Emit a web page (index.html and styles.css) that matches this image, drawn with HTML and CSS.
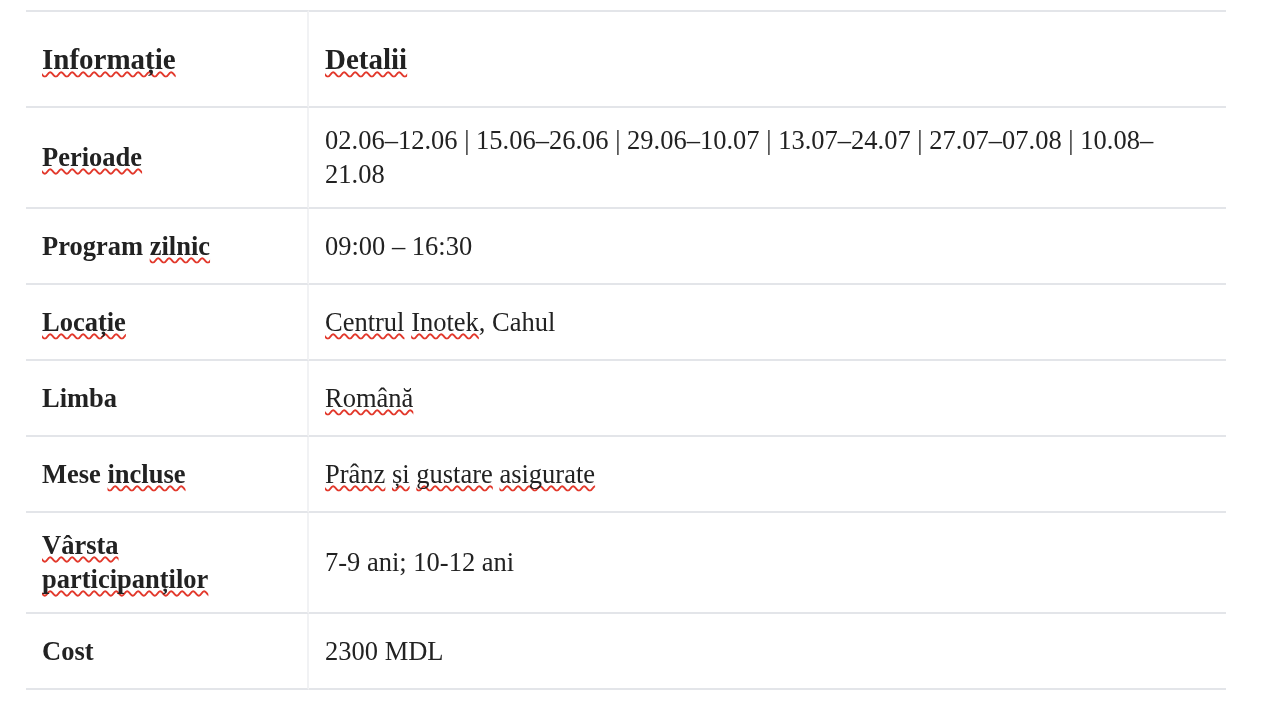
FILE: index.html
```html
<!DOCTYPE html>
<html lang="ro">
<head>
<meta charset="utf-8">
<title>Informații tabără</title>
<link rel="stylesheet" href="styles.css">
</head>
<body>
<table class="info">
  <colgroup><col class="c1"><col class="c2"></colgroup>
  <thead>
    <tr class="head">
      <th><span class="sp">Informație</span></th>
      <th><span class="sp">Detalii</span></th>
    </tr>
  </thead>
  <tbody>
    <tr class="row">
      <td class="k"><span class="sp">Perioade</span></td>
      <td>02.06–12.06 | 15.06–26.06 | 29.06–10.07 | 13.07–24.07 | 27.07–07.08 | 10.08–21.08</td>
    </tr>
    <tr class="row">
      <td class="k">Program <span class="sp">zilnic</span></td>
      <td>09:00 – 16:30</td>
    </tr>
    <tr class="row">
      <td class="k"><span class="sp">Locație</span></td>
      <td><span class="sp">Centrul</span> <span class="sp">Inotek</span>, Cahul</td>
    </tr>
    <tr class="row">
      <td class="k">Limba</td>
      <td><span class="sp">Română</span></td>
    </tr>
    <tr class="row">
      <td class="k">Mese <span class="sp">incluse</span></td>
      <td><span class="sp">Prânz</span> <span class="sp">și</span> <span class="sp">gustare</span> <span class="sp">asigurate</span></td>
    </tr>
    <tr class="row">
      <td class="k"><span class="sp">Vârsta</span> <span class="sp">participanților</span></td>
      <td>7-9 ani; 10-12 ani</td>
    </tr>
    <tr class="row">
      <td class="k">Cost</td>
      <td>2300 MDL</td>
    </tr>
  </tbody>
</table>
</body>
</html>
```
FILE: styles.css
```css
html, body {
  margin: 0;
  padding: 0;
  background: #ffffff;
}

body {
  font-family: "Liberation Serif", "Times New Roman", serif;
  color: #222222;
  -webkit-font-smoothing: antialiased;
}

.info {
  border-collapse: separate;
  border-spacing: 0;
  table-layout: fixed;
  width: 1200px;
  margin: 10px 0 0 26px;
  will-change: transform;
}

.c1 { width: 283px; }

.info th,
.info td {
  border-bottom: 2px solid #e3e5e9;
  vertical-align: middle;
  text-align: left;
  padding: 15px 32px 16px 16px;
  line-height: 34px;
  font-size: 26.5px;
}

.info th:first-child,
.info td:first-child {
  border-right: 2px solid #f1f2f4;
  padding-right: 24px;
}

.info th {
  border-top: 2px solid #e3e5e9;
  font-size: 29px;
  font-weight: bold;
}

.info td.k {
  font-weight: bold;
}

.head { height: 98px; }
.row { height: 76px; }

.sp {
  text-decoration-line: underline;
  text-decoration-style: wavy;
  text-decoration-color: #e2382b;
  text-decoration-thickness: 1.5px;
  text-decoration-skip-ink: none;
  text-underline-offset: 2px;
}
```
